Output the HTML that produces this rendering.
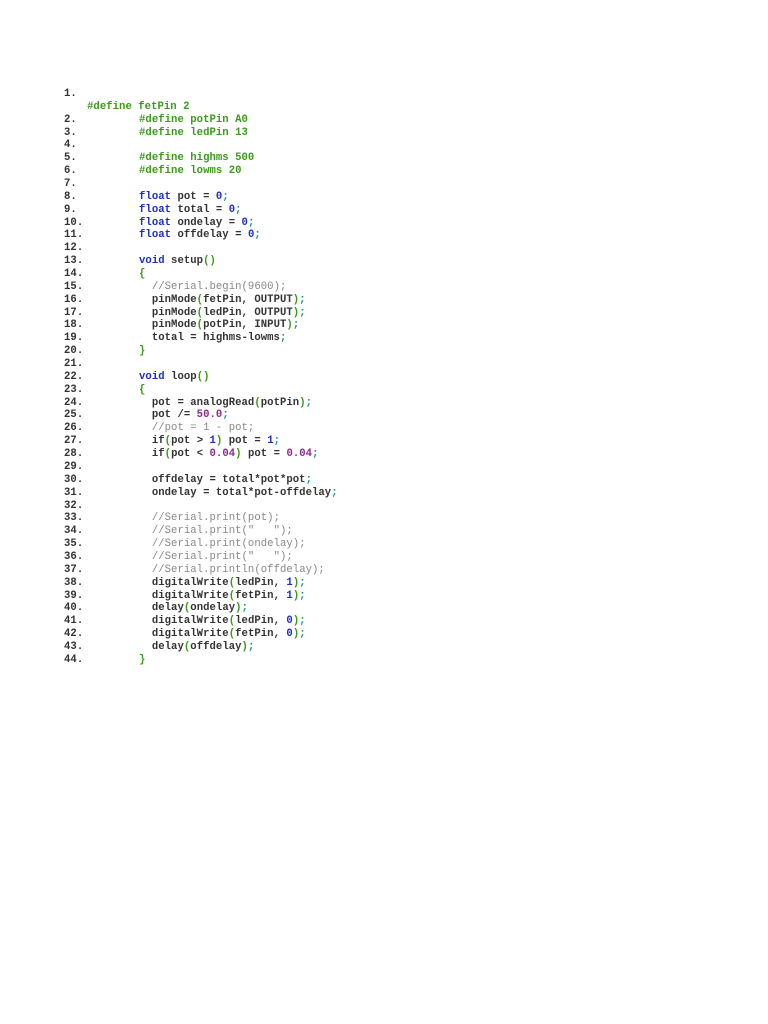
<!DOCTYPE html>
<html><head><meta charset="utf-8"><style>
body{margin:0;background:#fff;width:768px;height:1024px;overflow:hidden}
pre{position:absolute;left:64px;top:88px;margin:0;font-family:"Liberation Mono",monospace;font-size:10.6px;line-height:12.86px;color:#333;font-weight:bold;letter-spacing:0.05px}
i{font-style:normal;display:inline-block;width:75px}
.g{color:#3a9a1c}.b{color:#1c2ec0}.p{color:#8a2a8a}.c{color:#888;font-weight:normal}.t{color:#1a8a8a}
</style></head><body>
<pre><i>1.</i>
<i style="width:23px"></i><span class="g">#define fetPin 2</span>
<i>2.</i><span class="g">#define potPin A0</span>
<i>3.</i><span class="g">#define ledPin 13</span>
<i>4.</i>
<i>5.</i><span class="g">#define highms 500</span>
<i>6.</i><span class="g">#define lowms 20</span>
<i>7.</i>
<i>8.</i><span class="b">float</span> pot = <span class="b">0</span><span class="t">;</span>
<i>9.</i><span class="b">float</span> total = <span class="b">0</span><span class="t">;</span>
<i>10.</i><span class="b">float</span> ondelay = <span class="b">0</span><span class="t">;</span>
<i>11.</i><span class="b">float</span> offdelay = <span class="b">0</span><span class="t">;</span>
<i>12.</i>
<i>13.</i><span class="b">void</span> setup<span class="g">()</span>
<i>14.</i><span class="g">{</span>
<i>15.</i>  <span class="c">//Serial.begin(9600);</span>
<i>16.</i>  pinMode<span class="g">(</span>fetPin, OUTPUT<span class="g">)</span><span class="t">;</span>
<i>17.</i>  pinMode<span class="g">(</span>ledPin, OUTPUT<span class="g">)</span><span class="t">;</span>
<i>18.</i>  pinMode<span class="g">(</span>potPin, INPUT<span class="g">)</span><span class="t">;</span>
<i>19.</i>  total = highms-lowms<span class="t">;</span>
<i>20.</i><span class="g">}</span>
<i>21.</i>
<i>22.</i><span class="b">void</span> loop<span class="g">()</span>
<i>23.</i><span class="g">{</span>
<i>24.</i>  pot = analogRead<span class="g">(</span>potPin<span class="g">)</span><span class="t">;</span>
<i>25.</i>  pot /= <span class="p">50.0</span><span class="t">;</span>
<i>26.</i>  <span class="c">//pot = 1 - pot;</span>
<i>27.</i>  if<span class="g">(</span>pot &gt; <span class="b">1</span><span class="g">)</span> pot = <span class="b">1</span><span class="t">;</span>
<i>28.</i>  if<span class="g">(</span>pot &lt; <span class="p">0.04</span><span class="g">)</span> pot = <span class="p">0.04</span><span class="t">;</span>
<i>29.</i>
<i>30.</i>  offdelay = total*pot*pot<span class="t">;</span>
<i>31.</i>  ondelay = total*pot-offdelay<span class="t">;</span>
<i>32.</i>
<i>33.</i>  <span class="c">//Serial.print(pot);</span>
<i>34.</i>  <span class="c">//Serial.print("   ");</span>
<i>35.</i>  <span class="c">//Serial.print(ondelay);</span>
<i>36.</i>  <span class="c">//Serial.print("   ");</span>
<i>37.</i>  <span class="c">//Serial.println(offdelay);</span>
<i>38.</i>  digitalWrite<span class="g">(</span>ledPin, <span class="b">1</span><span class="g">)</span><span class="t">;</span>
<i>39.</i>  digitalWrite<span class="g">(</span>fetPin, <span class="b">1</span><span class="g">)</span><span class="t">;</span>
<i>40.</i>  delay<span class="g">(</span>ondelay<span class="g">)</span><span class="t">;</span>
<i>41.</i>  digitalWrite<span class="g">(</span>ledPin, <span class="b">0</span><span class="g">)</span><span class="t">;</span>
<i>42.</i>  digitalWrite<span class="g">(</span>fetPin, <span class="b">0</span><span class="g">)</span><span class="t">;</span>
<i>43.</i>  delay<span class="g">(</span>offdelay<span class="g">)</span><span class="t">;</span>
<i>44.</i><span class="g">}</span>
</pre>
</body></html>
